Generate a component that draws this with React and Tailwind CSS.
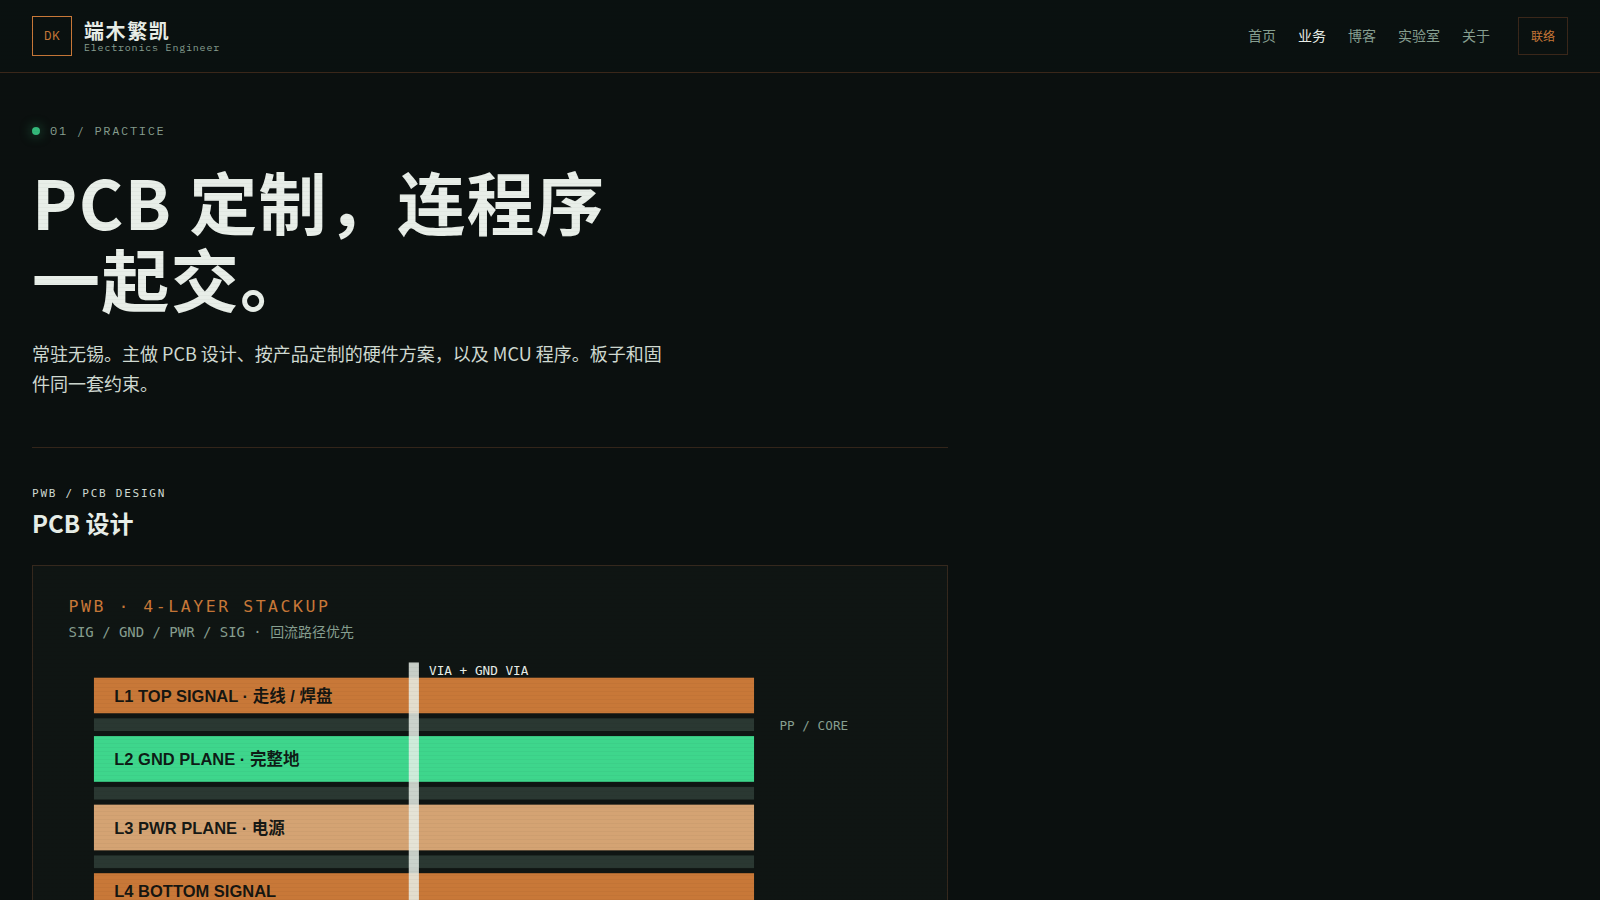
import React from 'react';

const NAV_ITEMS = [
  { label: '首页', href: '#home' },
  { label: '业务', href: '#practice', active: true },
  { label: '博客', href: '#blog' },
  { label: '实验室', href: '#lab' },
  { label: '关于', href: '#about' },
];

// Board cross-section, top to bottom, in viewBox units
const COPPER_LAYERS = [
  { y: 88, height: 28, fill: '#c87838', textY: 107, label: 'L1 TOP SIGNAL · 走线 / 焊盘' },
  { y: 134, height: 36, fill: '#3ed68c', textY: 157, label: 'L2 GND PLANE · 完整地' },
  { y: 188, height: 36, fill: '#d4a373', textY: 211, label: 'L3 PWR PLANE · 电源' },
  { y: 242, height: 28, fill: '#c87838', textY: 261, label: 'L4 BOTTOM SIGNAL' },
];

const CORE_LAYERS = [120, 174, 228];

const MONO = "font-['IBM_Plex_Mono','Liberation_Mono','Noto_Sans_CJK_SC',monospace]";
const SVG_MONO = "font-['DejaVu_Sans_Mono','Noto_Sans_CJK_SC',monospace]";

function Header() {
  return (
    <header className="flex items-center justify-between h-[73px] px-8 border-b border-[#3a271a] bg-[#0a1110]">
      <a href="#home" className="flex items-center gap-3">
        <span className={`flex items-center justify-center size-10 border border-[#c87838] text-[#c87838] text-[13px] tracking-[0.04em] ${MONO}`}>
          DK
        </span>
        <span className="flex flex-col">
          <span className="text-xl leading-[23px] font-bold tracking-[0.08em] text-[#e8eee8]">端木繁凯</span>
          <span className={`text-[10px] leading-3 tracking-[0.08em] text-[#879f90] ${MONO}`}>Electronics Engineer</span>
        </span>
      </a>
      <nav className="flex items-center gap-7">
        <ul className="flex items-center gap-[22px] pb-0.5 text-sm">
          {NAV_ITEMS.map((item) => (
            <li key={item.href}>
              <a href={item.href} className={item.active ? 'text-[#e8eee8]' : 'text-[#879f90]'}>
                {item.label}
              </a>
            </li>
          ))}
        </ul>
        <button type="button" className="h-[38px] px-3 border border-[#3a271a] text-xs text-[#c87838]">
          联络
        </button>
      </nav>
    </header>
  );
}

function StackupDiagram() {
  return (
    <svg viewBox="0 0 720 320" className="block w-full h-auto" role="img" aria-label="PWB 4-layer stackup">
      <text x="28" y="36" fontSize="13" letterSpacing="2" fill="#c87838" className={SVG_MONO}>
        PWB · 4-LAYER STACKUP
      </text>
      <text x="28" y="56" fontSize="11" fill="#879f90" className={SVG_MONO}>
        SIG / GND / PWR / SIG · 回流路径优先
      </text>
      {COPPER_LAYERS.map((layer) => (
        <g key={layer.label}>
          <rect x="48" y={layer.y} width="520" height={layer.height} fill={layer.fill} />
          <text
            x="64"
            y={layer.textY}
            fontSize="13"
            fontWeight="600"
            fill="#0b100f"
            fillOpacity="0.95"
            className="font-['Liberation_Sans','Noto_Sans_CJK_SC',sans-serif]"
          >
            {layer.label}
          </text>
        </g>
      ))}
      {CORE_LAYERS.map((y) => (
        <rect key={y} x="48" y={y} width="520" height="10" fill="#2a3832" />
      ))}
      <rect x="296" y="76" width="8" height="206" fill="#e8eee8" opacity="0.85" />
      <text x="312" y="86" fontSize="10" fill="#e8eee8" className={SVG_MONO}>
        VIA + GND VIA
      </text>
      <text x="588" y="129" fontSize="10" fill="#879f90" className={SVG_MONO}>
        PP / CORE
      </text>
    </svg>
  );
}

export default function App() {
  return (
    <div className="relative h-screen overflow-hidden bg-[#0b100f] text-[#d0dad2] font-['Noto_Sans_CJK_SC',sans-serif]">
      <Header />
      <main className="max-w-[980px] px-8 pt-12">
        <section className="pb-[49px] border-b border-[#35261b]">
          <p className={`flex items-center gap-2.5 text-xs leading-5 tracking-[0.14em] text-[#879f90] ${MONO}`}>
            <span className="size-2 rounded-full bg-[#34b87a] shadow-[0_0_12px_#34b87a99]" />
            01 / PRACTICE
          </p>
          <h1 className="mt-[21px] text-[68px] leading-[77px] font-bold tracking-[0.02em] text-[#e8eee8]">
            PCB 定制，连程序
            <br />
            一起交。
          </h1>
          <p className="mt-[22px] max-w-[640px] text-lg leading-[30px]">
            常驻无锡。主做 PCB 设计、按产品定制的硬件方案，以及 MCU 程序。板子和固件同一套约束。
          </p>
        </section>
        <section className="pt-9">
          <p className="text-[11px] leading-5 tracking-[0.16em] font-['DejaVu_Sans_Mono',monospace]">PWB / PCB DESIGN</p>
          <h2 className="mt-0.5 text-2xl leading-[34px] font-bold text-[#e8eee8]">PCB 设计</h2>
          <figure className="mt-[25px] border border-[#35281d] bg-[#0f1513]">
            <StackupDiagram />
          </figure>
        </section>
      </main>
      {/* scanlines */}
      <div className="absolute inset-0 pointer-events-none bg-[repeating-linear-gradient(0deg,rgba(0,0,0,0.03)_0px,rgba(0,0,0,0.03)_1px,transparent_1px,transparent_4px)]" />
    </div>
  );
}
